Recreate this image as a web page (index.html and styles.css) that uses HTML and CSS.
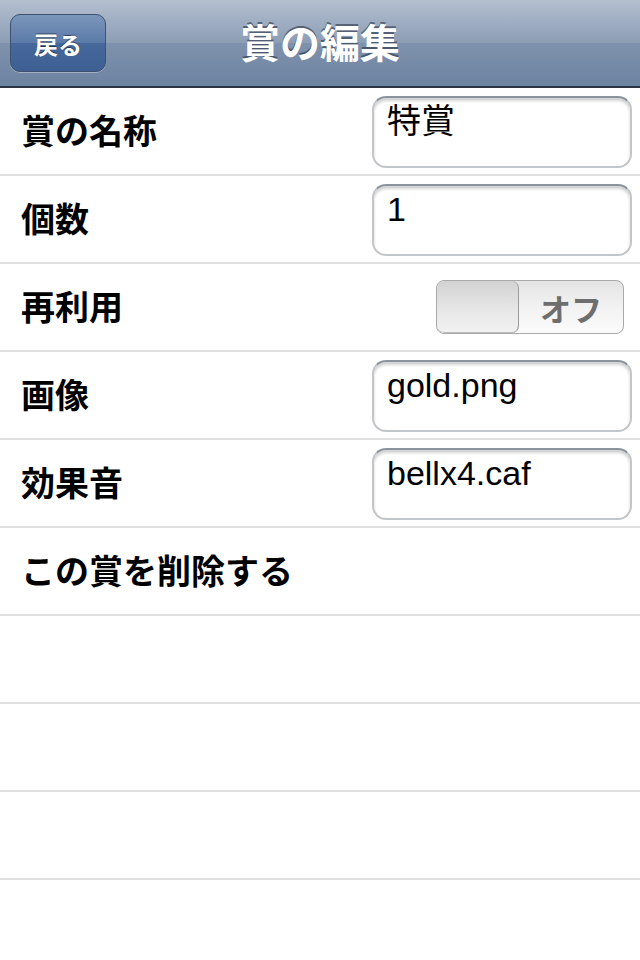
FILE: index.html
```html
<!DOCTYPE html>
<html lang="ja">
<head>
    <meta charset="UTF-8">
    <meta name="viewport" content="width=device-width, initial-scale=1.0">
    <title>賞の編集</title>
    <link rel="stylesheet" href="styles.css">
</head>
<body>

    <div class="navbar">
        <button class="back-btn">戻る</button>
        <h1 class="title">賞の編集</h1>
    </div>

    <div class="table">
        <div class="row">
            <span class="label">賞の名称</span>
            <div class="field">特賞</div>
        </div>
        <div class="row">
            <span class="label">個数</span>
            <div class="field">1</div>
        </div>
        <div class="row">
            <span class="label">再利用</span>
            <div class="switch">
                <div class="knob"></div>
                <div class="switch-text">オフ</div>
            </div>
        </div>
        <div class="row">
            <span class="label">画像</span>
            <div class="field">gold.png</div>
        </div>
        <div class="row">
            <span class="label">効果音</span>
            <div class="field">bellx4.caf</div>
        </div>
        <div class="row">
            <span class="label">この賞を削除する</span>
        </div>
        <div class="row"></div>
        <div class="row"></div>
        <div class="row"></div>
    </div>

</body>
</html>
```

FILE: styles.css
```css
body {
    font-family: 'Liberation Sans', 'Noto Sans CJK JP', sans-serif;
    background-color: #fff;
    margin: 0;
    padding: 0;
}

.navbar {
    height: 86px;
    border-bottom: 2px solid #2b3440;
    background: linear-gradient(#b3bfcf, #8c9db5 50%, #7f92ad 50%, #6c83a1);
    display: flex;
    align-items: center;
    justify-content: center;
    position: relative;
}

.title {
    margin: 0 0 4px 0;
    color: white;
    font-family: 'Noto Sans CJK JP', sans-serif;
    font-size: 40px;
    font-weight: bold;
    text-shadow: 0 -2px 0 rgba(40, 50, 70, 0.6);
}

.back-btn {
    position: absolute;
    left: 10px;
    top: 14px;
    width: 96px;
    height: 58px;
    border: 1px solid #3d5270;
    border-radius: 10px;
    background: linear-gradient(#7c96bb, #5a7aa8 50%, #46689b 50%, #3e5f93);
    box-shadow: 0 1px 0 rgba(255, 255, 255, 0.35);
    color: white;
    font-family: 'Noto Sans CJK JP', sans-serif;
    font-size: 24px;
    font-weight: bold;
    text-shadow: 0 -1px 0 rgba(0, 0, 0, 0.5);
    padding: 0;
}

.row {
    height: 86px;
    border-bottom: 2px solid #e0e0e0;
    display: flex;
    align-items: center;
    justify-content: space-between;
    padding: 0 8px 0 21px;
}

.label {
    font-family: 'Noto Sans CJK JP', sans-serif;
    font-size: 34px;
    font-weight: bold;
    color: #000;
    margin-bottom: 4px;
}

.field {
    box-sizing: border-box;
    width: 260px;
    height: 72px;
    border: 2px solid #c2c5c9;
    border-top-color: #8d939b;
    border-radius: 14px;
    box-shadow: inset 0 3px 3px rgba(0, 0, 0, 0.18);
    padding: 3px 0 0 13px;
    font-size: 34px;
    line-height: 40px;
    color: #000;
    align-self: flex-start;
    margin-top: 8px;
}

.switch {
    box-sizing: border-box;
    width: 188px;
    height: 54px;
    margin-right: 8px;
    border: 1px solid #a9a9a9;
    border-radius: 8px;
    background: linear-gradient(#e4e4e4, #f2f2f2 50%, #fbfbfb);
    display: flex;
    overflow: hidden;
}

.knob {
    width: 81px;
    border-right: 1px solid #9b9b9b;
    border-radius: 7px;
    background: linear-gradient(#d2d2d2, #e8e8e8 60%, #f2f2f2);
    box-shadow: inset 0 -1px 0 #bdbdbd;
}

.switch-text {
    flex: 1;
    display: flex;
    align-items: center;
    justify-content: center;
    font-family: 'Noto Sans CJK JP', sans-serif;
    font-size: 31px;
    font-weight: bold;
    color: #6e6e6e;
}
```
